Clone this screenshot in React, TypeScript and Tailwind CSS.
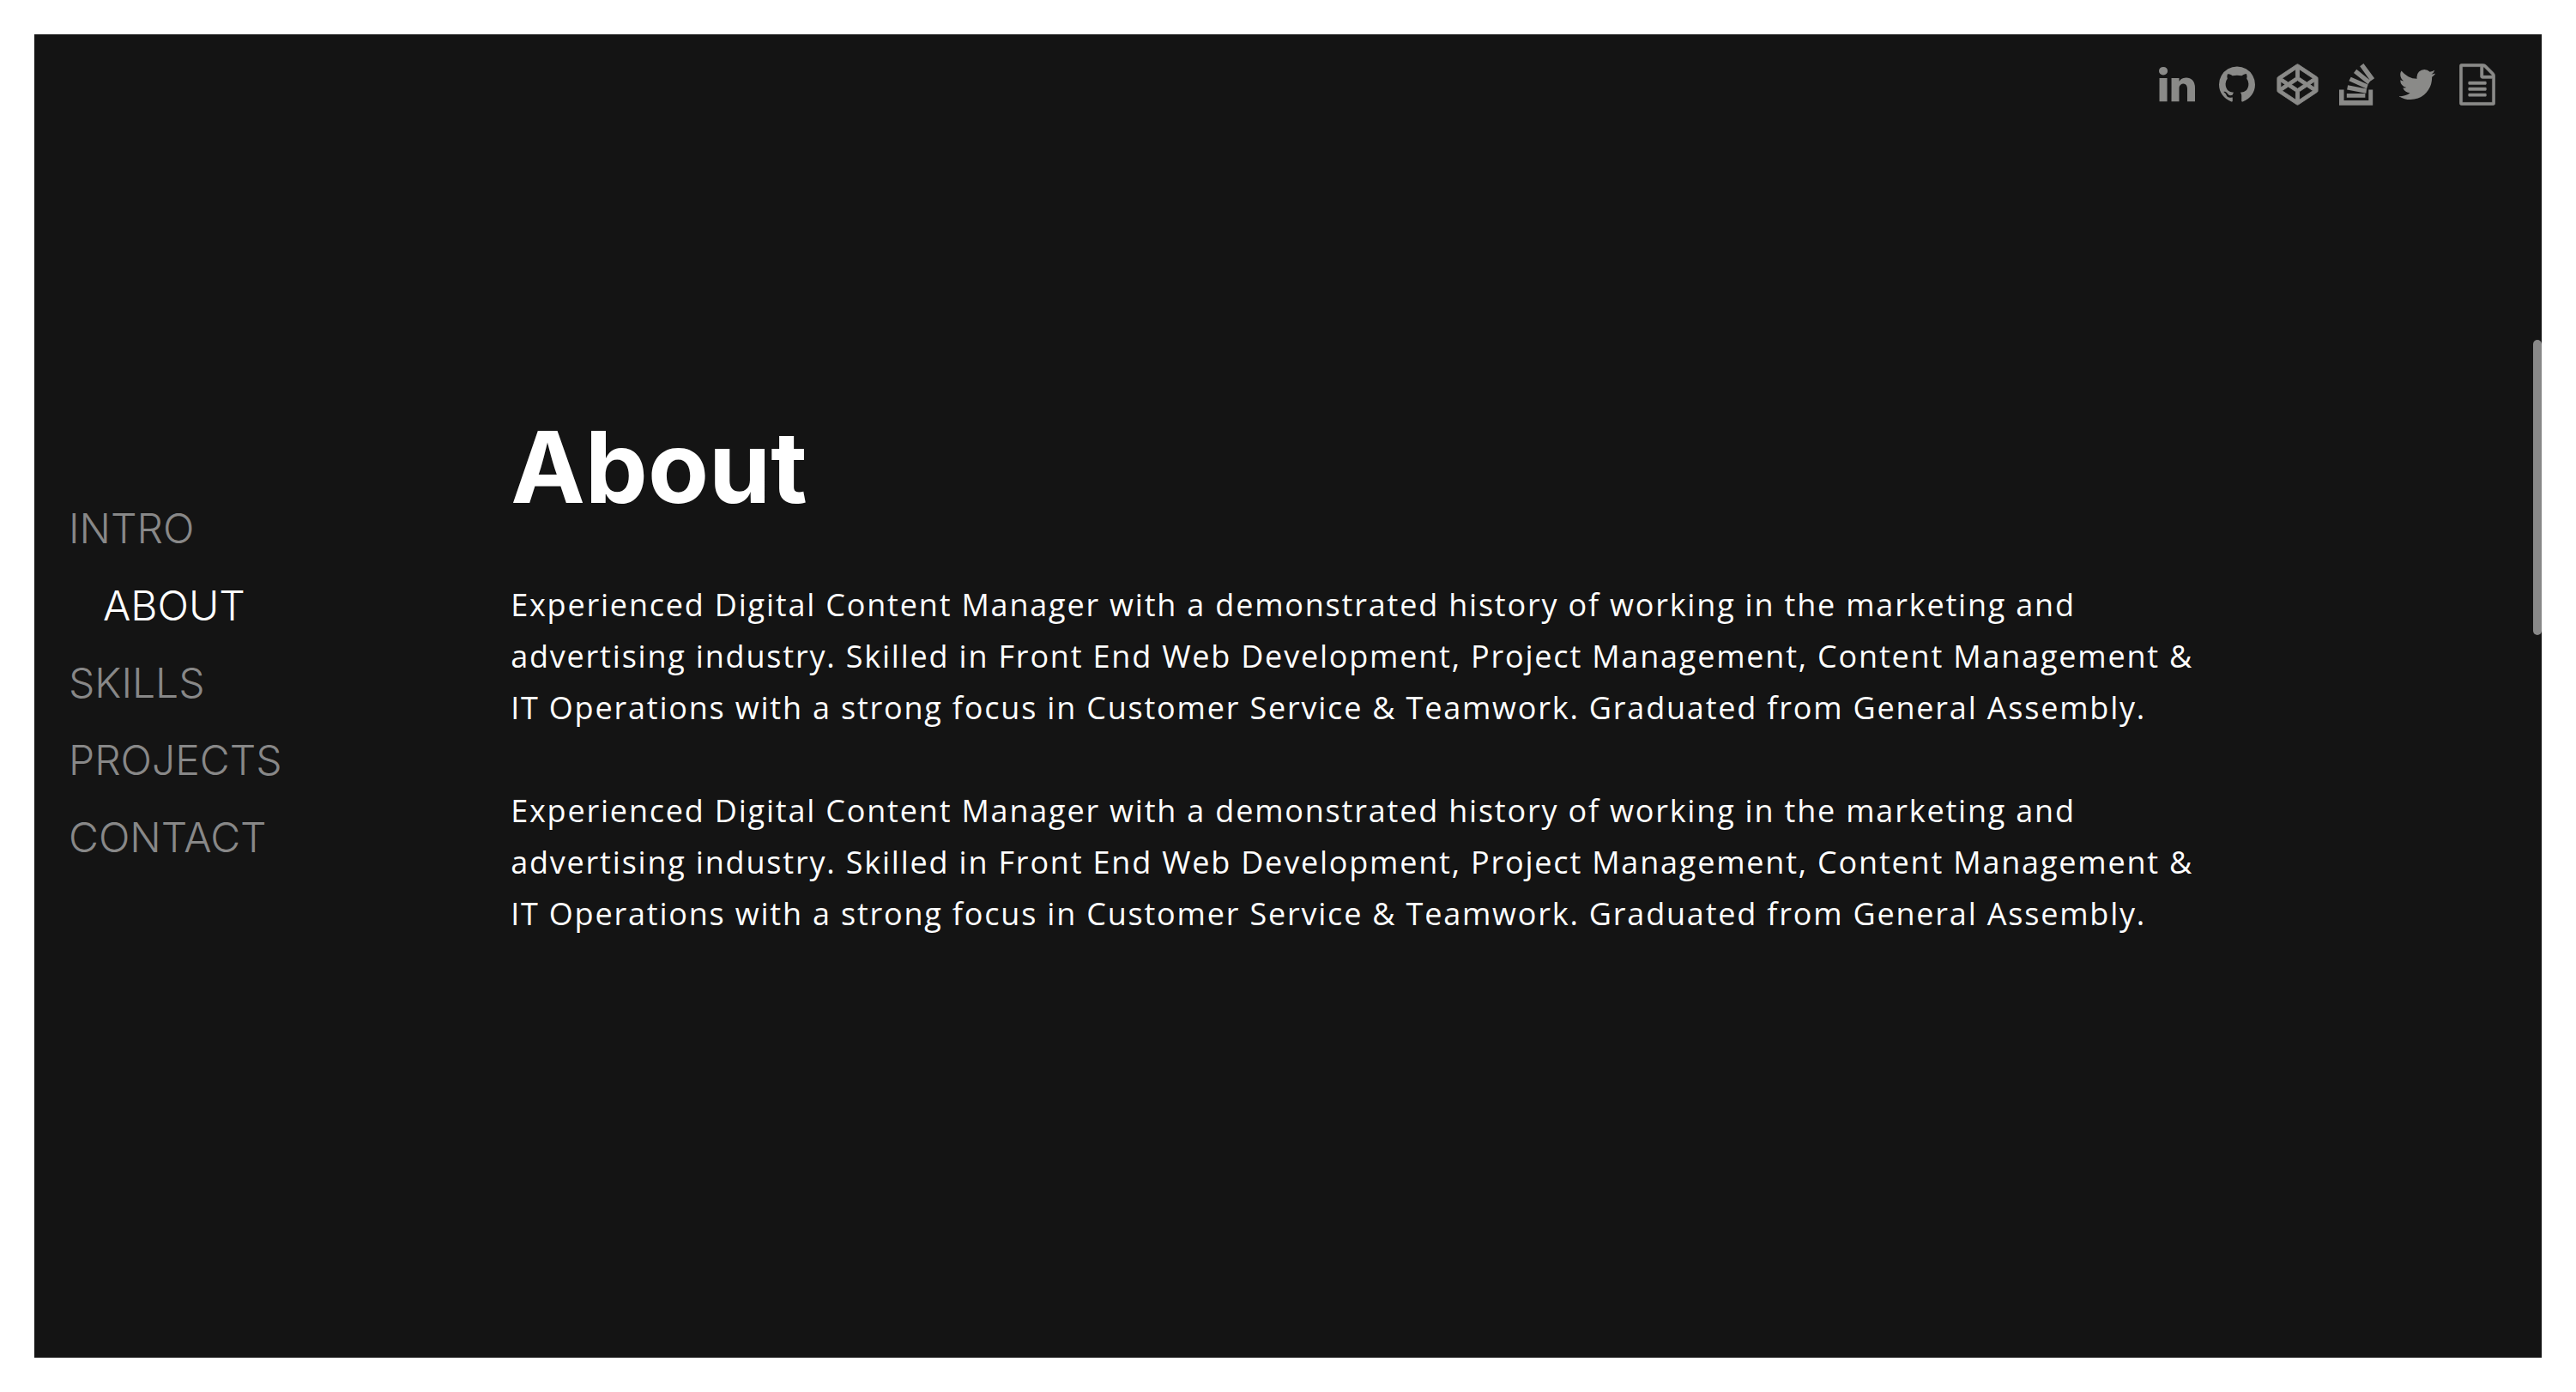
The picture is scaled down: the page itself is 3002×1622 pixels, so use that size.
import React from "react";

type IconProps = { className?: string };

const LinkedinIcon = ({ className }: IconProps) => (
  <svg viewBox="0 0 1536 1792" fill="currentColor" aria-hidden="true" className={className}>
    <path d="M349 625v991h-330v-991h330zm21-306q1 73-50.5 122t-135.5 49h-2q-82 0-132-49t-50-122q0-74 51.5-122.5t134.5-48.5 133 48.5 51 122.5zm1166 729v568h-329v-530q0-105-40.5-164.5t-126.5-59.5q-63 0-105.5 34.5t-63.5 85.5q-11 30-11 81v553h-329q2-399 2-647t-1-296l-1-48h329v144h-2q20-32 41-56t56.5-52 87-43.5 114.5-15.5q171 0 275 113.5t104 332.5z" />
  </svg>
);

const GithubIcon = ({ className }: IconProps) => (
  <svg viewBox="0 0 1536 1792" fill="currentColor" aria-hidden="true" className={className}>
    <path d="M768 128q209 0 385.500 103t279.500 279.500 103 385.500q0 251-146.500 451.500t-378.500 277.500q-27 5-40-7t-13-30q0-3 .5-76.500t.5-134.500q0-97-52-142 57-6 102.500-18t94-39 81-66.500 53-105 20.500-150.500q0-119-79-206 37-91-8-204-28-9-81 11t-92 44l-38 24q-93-26-192-26t-192 26q-16-11-42.500-27t-83.500-38.500-85-13.500q-45 113-8 204-79 87-79 206 0 85 20.500 150t52.500 105 80.500 67 94 39 102.500 18q-39 36-49 103-21 10-45 15t-57 5-65.500-21.500-55.500-62.500q-19-32-48.500-52t-49.500-24l-20-3q-21 0-29 4.500t-5 11.500 9 14 13 12l7 5q22 10 43.500 38t31.500 51l10 23q13 38 44 61.500t67 30 69.500 7 55.500-3.500l23-4q0 38 .5 88.500t.5 54.500q0 18-13 30t-40 7q-232-77-378.500-277.500t-146.500-451.500q0-209 103-385.500t279.500-279.500 385.500-103z" />
  </svg>
);

const CodepenIcon = ({ className }: IconProps) => (
  <svg
    viewBox="-32 -32 1856 1856"
    fill="currentColor"
    stroke="currentColor"
    strokeWidth="32"
    aria-hidden="true"
    className={className}
  >
    <path d="M216 1169l603 402v-359l-334-223zm-62-144l193-129-193-129v258zm819 546l603-402-269-180-334 223v359zm-77-493l272-182-272-182-272 182zm-411-275l334-223v-359l-603 402zm960 93l193 129v-258zm-138-93l269-180-603-402v359zm485-180v546q0 41-34 64l-819 546q-21 13-43 13t-43-13l-819-546q-34-23-34-64v-546q0-41 34-64l819-546q21-13 43-13t43 13l819 546q34 23 34 64z" />
  </svg>
);

const StackOverflowIcon = ({ className }: IconProps) => (
  <svg viewBox="78 72 126 150" fill="currentColor" aria-hidden="true" className={className}>
    <path d="M78 165h17v39h88v-39h15v56H78zM105 179h66v15h-66zM109 149l67 13-2 16-68-13zM120 120l61 27-5 15-63-28zM140 93l50 40-9 13-51-40zM165 72l39 53-14 10-38-53z" />
  </svg>
);

const TwitterIcon = ({ className }: IconProps) => (
  <svg viewBox="128 0 1536 1792" fill="currentColor" aria-hidden="true" className={className}>
    <path d="M1684 408q-67 98-162 167 1 14 1 42 0 130-38 259.500t-115.500 248.500-184.500 210.500-258 146-323 54.500q-271 0-496-145 35 4 78 4 225 0 401-138-105-2-188-64.500t-114-159.500q33 5 61 5 43 0 85-11-112-23-185.500-111.500t-73.500-205.500v-4q68 38 146 41-66-44-105-115t-39-154q0-88 44-163 121 149 294.500 238.500t371.500 99.500q-8-38-8-74 0-134 94.500-228.500t228.500-94.500q140 0 236 102 109-21 205-78-37 115-142 178 93-10 186-50z" />
  </svg>
);

const ResumeIcon = ({ className }: IconProps) => (
  <svg
    viewBox="-8 -8 1552 1808"
    fill="currentColor"
    stroke="currentColor"
    strokeWidth="16"
    aria-hidden="true"
    className={className}
  >
    <path d="M1468 380q28 28 48 76t20 88v1152q0 40-28 68t-68 28H96q-40 0-68-28t-28-68V96q0-40 28-68T96 0h896q40 0 88 20t76 48zM1024 136v376h376q-10-29-22-41l-313-313q-12-12-41-22zm384 1528V640H992q-40 0-68-28t-28-68V128H128v1536h1280zM384 800q0-14 9-23t23-9h704q14 0 23 9t9 23v64q0 14-9 23t-23 9H416q-14 0-23-9t-9-23v-64zm736 224q14 0 23 9t9 23v64q0 14-9 23t-23 9H416q-14 0-23-9t-9-23v-64q0-14 9-23t23-9h704zm0 256q14 0 23 9t9 23v64q0 14-9 23t-23 9H416q-14 0-23-9t-9-23v-64q0-14 9-23t23-9h704z" />
  </svg>
);

const socials = [
  { label: "LinkedIn", Icon: LinkedinIcon },
  { label: "GitHub", Icon: GithubIcon },
  { label: "CodePen", Icon: CodepenIcon },
  { label: "Stack Overflow", Icon: StackOverflowIcon },
  { label: "Twitter", Icon: TwitterIcon },
  { label: "Resume", Icon: ResumeIcon },
];

const sections = ["Intro", "About", "Skills", "Projects", "Contact"];
const current = "About";

const bio =
  "Experienced Digital Content Manager with a demonstrated history of working in the marketing and advertising industry. Skilled in Front End Web Development, Project Management, Content Management & IT Operations with a strong focus in Customer Service & Teamwork. Graduated from General Assembly.";

export default function App() {
  return (
    <div className="flex min-h-screen bg-white p-10 font-['Inter',sans-serif]">
      <div className="relative grid flex-1 grid-cols-1 bg-[#141414] text-white">
        <header className="z-10 col-start-1 row-start-1 self-start justify-self-end pt-[34px] pr-10">
          <ul className="flex">
            {socials.map(({ label, Icon }) => (
              <li key={label}>
                <a
                  href="#"
                  aria-label={label}
                  className="flex w-[70px] justify-center text-[#8a8a88] hover:text-white"
                >
                  <Icon className="h-[49px] w-auto" />
                </a>
              </li>
            ))}
          </ul>
        </header>

        <div className="col-start-1 row-start-1 flex items-center">
          <nav aria-label="Sections" className="w-[19%] shrink-0 pl-10">
            <ul className="text-5xl font-light uppercase">
              {sections.map((name) => (
                <li key={name} className="mb-[30px] leading-[60px]">
                  <a
                    href={`#${name.toLowerCase()}`}
                    aria-current={name === current ? "true" : undefined}
                    className={name === current ? "pl-10 text-white" : "text-[#888888]"}
                  >
                    {name}
                  </a>
                </li>
              ))}
            </ul>
          </nav>

          <main id="about" className="w-[68%]">
            <h1 className="mb-[54px] text-[116px] leading-[154px] font-bold">About</h1>
            <div className="font-['Open_Sans',sans-serif] text-4xl leading-[60px] tracking-wider">
              <p className="mb-[60px]">{bio}</p>
              <p className="mb-[60px]">{bio}</p>
            </div>
          </main>
        </div>

        <div
          aria-hidden="true"
          className="absolute top-[356px] right-0 h-[344px] w-2.5 rounded-[5px] bg-[#888888]"
        />
      </div>
    </div>
  );
}
